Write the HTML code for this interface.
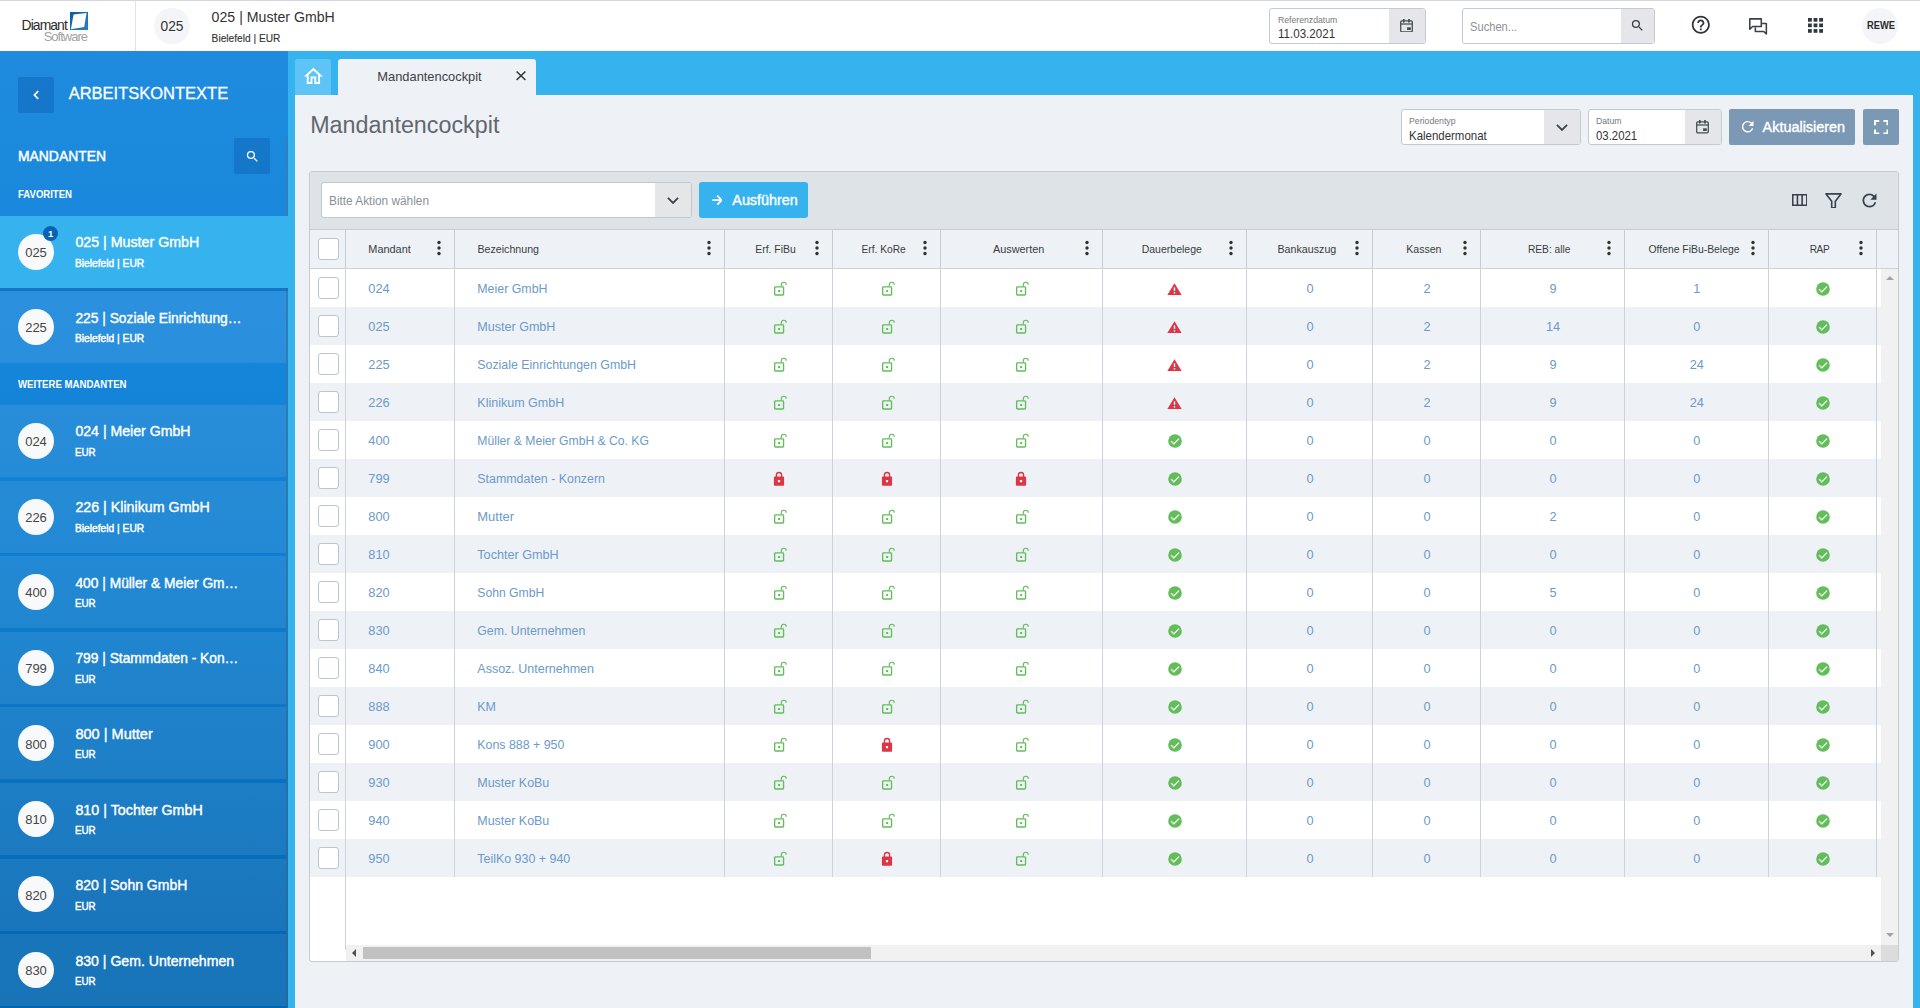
<!DOCTYPE html>
<html lang="de"><head><meta charset="utf-8"><title>Mandantencockpit</title><style>
html,body{margin:0;padding:0}
body{width:1920px;height:1008px;overflow:hidden;position:relative;background:#35b3ef;font-family:"Liberation Sans",sans-serif;}
div,span,svg,header,aside,main{position:absolute;}
.t{white-space:nowrap;}
#top{left:0;top:0;width:1920px;height:51px;background:#fff;box-sizing:border-box;border-top:1px solid #d3d6da;}
#top>*{margin-top:-1px}
#side{left:0;top:51px;width:288px;height:957px;overflow:hidden;background:linear-gradient(180deg,#1e8bde 0px,#1585d9 319px,#0c7bcc 579px,#0469b5 881px,#0366b1 957px);}
#main{left:0;top:0;width:1920px;height:1008px;}
#top,#side,#main{opacity:.999}
</style></head><body><header id="top"><span class="t" style="top: 19.01px; font-size: 13.9px; color: rgb(43, 43, 43); line-height: 13.9px; left: 21.6px; letter-spacing: -0.922px;">Diamant</span><span class="t" style="top: 30px; font-size: 13px; color: rgb(162, 162, 162); line-height: 13px; left: 43.7px; letter-spacing: -0.988px;">Software</span><svg class="i" style="left:70px;top:12px" width="18" height="18" viewBox="0 0 18 18"><defs><linearGradient id="lg" x1="0" y1="0" x2="1" y2="1"><stop offset="0" stop-color="#0f5c9e"></stop><stop offset="1" stop-color="#2a80c4"></stop></linearGradient></defs><rect width="18" height="18" fill="url(#lg)"></rect><path fill="#fff" d="M3.6 2.6L16.6 0.9 14.2 14.9 0.9 17.2z"></path></svg><div style="left:135px;top:0px;width:1px;height:51px;background:#dfe2e6;"></div><div style="left:154px;top:8px;width:36px;height:36px;background:#f4f5f8;border-radius:50%;"></div><span class="t" style="top: 20.02px; font-size: 13.72px; color: rgb(51, 51, 51); line-height: 13.72px; left: 22px; width: 300px; text-align: center; letter-spacing: 0.005px;">025</span><span class="t" style="top: 10px; font-size: 14.15px; color: rgb(51, 51, 51); line-height: 14.15px; left: 211.6px; letter-spacing: 0.005px;">025 | Muster GmbH</span><span class="t" style="top: 34.02px; font-size: 10.17px; color: rgb(51, 51, 51); line-height: 10.17px; -webkit-text-stroke: 0.12px rgb(51, 51, 51); left: 211.6px; letter-spacing: 0.008px;">Bielefeld | EUR</span><div style="left:1269px;top:8px;width:157px;height:36px;background:#fff;border:1px solid #c4cad1;border-radius:3px;box-sizing:border-box;overflow:hidden;"><div style="left:119px;top:0px;width:37px;height:34px;background:#e4e6e9;"></div></div><span class="t" style="top: 16.01px; font-size: 9.2px; color: rgb(116, 121, 127); line-height: 9.2px; left: 1278.3px; transform-origin: 0px 50%; transform: scaleX(0.9423);">Referenzdatum</span><span class="t" style="top: 28.01px; font-size: 12.5px; color: rgb(51, 51, 51); line-height: 12.5px; left: 1278.3px; transform-origin: 0px 50%; transform: scaleX(0.9263);">11.03.2021</span><svg class="i" style="left:1400.1px;top:18.5px" width="13" height="13.5" viewBox="0 0 13 13.5"><g fill="none" stroke="#454c53"><rect x="0.7" y="1.9" width="11.6" height="10.9" rx="1.1" stroke-width="1.25"></rect><path d="M0.7 5h11.6" stroke-width="1.25"></path><path d="M3.8 0.4v2.4M9 0.4v2.4" stroke-width="1.7" stroke-linecap="round"></path></g><rect x="7.1" y="8.3" width="3.7" height="2.7" fill="#454c53"></rect></svg><div style="left:1462px;top:8px;width:193px;height:36px;background:#fff;border:1px solid #c4cad1;border-radius:3px;box-sizing:border-box;overflow:hidden;"><div style="left:158px;top:0px;width:34px;height:34px;background:#e4e6e9;"></div></div><span class="t" style="top: 20px; font-size: 13px; color: rgb(141, 146, 152); line-height: 13px; left: 1470.2px; transform-origin: 0px 50%; transform: scaleX(0.8573);">Suchen...</span><svg class="i" style="left:1629.5px;top:18.0px" width="15" height="15" viewBox="0 0 24 24"><path fill="#3a3f45" d="M15.5 14h-.79l-.28-.27A6.471 6.471 0 0 0 16 9.5 6.5 6.5 0 1 0 9.5 16c1.61 0 3.09-.59 4.23-1.57l.27.28v.79l5 4.99L20.49 19l-4.99-5zm-6 0C7.01 14 5 11.99 5 9.5S7.01 5 9.5 5 14 7.01 14 9.5 11.99 14 9.5 14z"></path></svg><svg class="i" style="left:1690.2px;top:14.4px" width="21.6" height="21.6" viewBox="0 0 24 24"><path fill="#2f3439" d="M11 18h2v-2h-2v2zm1-16C6.48 2 2 6.48 2 12s4.48 10 10 10 10-4.48 10-10S17.52 2 12 2zm0 18c-4.41 0-8-3.59-8-8s3.59-8 8-8 8 3.59 8 8-3.59 8-8 8zm0-14c-2.21 0-4 1.79-4 4h2c0-1.1.9-2 2-2s2 .9 2 2c0 2-3 1.75-3 5h2c0-2.25 3-2.500 3-5 0-2.210-1.790-4-4-4z"></path></svg><svg class="i" style="left:1748px;top:17px" width="21" height="19" viewBox="0 0 21 19"><g fill="none" stroke="#3a4149" stroke-width="1.55" stroke-linejoin="round"><path d="M1.8 1.85h11.5v7.6H4.6L1.8 12.3z"></path><path d="M14.1 6.45h4.25V17l-2.6-2.5H7.35v-4.3"></path></g></svg><svg class="i" style="left:1808.3px;top:18.1px" width="15.2" height="15.2" viewBox="0 0 15.2 15.2"><rect x="0.0" y="0.0" width="3.8" height="3.7" fill="#30373e"></rect><rect x="5.6" y="0.0" width="3.8" height="3.7" fill="#30373e"></rect><rect x="11.2" y="0.0" width="3.8" height="3.7" fill="#30373e"></rect><rect x="0.0" y="5.5" width="3.8" height="3.7" fill="#30373e"></rect><rect x="5.6" y="5.5" width="3.8" height="3.7" fill="#30373e"></rect><rect x="11.2" y="5.5" width="3.8" height="3.7" fill="#30373e"></rect><rect x="0.0" y="11.1" width="3.8" height="3.7" fill="#30373e"></rect><rect x="5.6" y="11.1" width="3.8" height="3.7" fill="#30373e"></rect><rect x="11.2" y="11.1" width="3.8" height="3.7" fill="#30373e"></rect></svg><div style="left:1862px;top:7.5px;width:36px;height:36px;background:#f4f5f8;border-radius:50%;"></div><span class="t" style="top: 20.01px; font-size: 11.4px; color: rgb(43, 43, 43); line-height: 11.4px; font-weight: 700; left: 1730.6px; width: 300px; text-align: center; transform-origin: 50% 50%; transform: scaleX(0.819);">REWE</span></header>
<aside id="side"><div style="left:18px;top:26px;width:36px;height:36px;background:rgba(10,90,170,0.38);border-radius:2px;"></div><svg class="i" style="left:30.5px;top:37.5px" width="10" height="12" viewBox="0 0 10 12"><path fill="none" stroke="#fff" stroke-width="1.7" d="M7.2 2.2L3.4 6l3.8 3.8"></path></svg><span class="t" style="top: 34.01px; font-size: 16.5px; color: rgb(255, 255, 255); line-height: 16.5px; -webkit-text-stroke: 0.3px rgb(255, 255, 255); left: 68.7px; letter-spacing: -0.002px;">ARBEITSKONTEXTE</span><span class="t" style="top: 99.01px; font-size: 13.89px; color: rgb(255, 255, 255); line-height: 13.89px; -webkit-text-stroke: 0.45px rgb(255, 255, 255); left: 18px; letter-spacing: 0.014px;">MANDANTEN</span><div style="left:234px;top:87px;width:36px;height:36px;background:rgba(10,90,170,0.38);border-radius:2px;"></div><svg class="i" style="left:244.5px;top:97.5px" width="15" height="15" viewBox="0 0 24 24"><path fill="#fff" d="M15.5 14h-.79l-.28-.27A6.471 6.471 0 0 0 16 9.5 6.5 6.5 0 1 0 9.5 16c1.61 0 3.09-.59 4.23-1.57l.27.28v.79l5 4.99L20.49 19l-4.99-5zm-6 0C7.01 14 5 11.99 5 9.5S7.01 5 9.5 5 14 7.01 14 9.5 11.99 14 9.5 14z"></path></svg><span class="t" style="top: 139.01px; font-size: 10.3px; color: rgb(255, 255, 255); line-height: 10.3px; font-weight: 700; left: 18px; transform-origin: 0px 50%; transform: scaleX(0.9283);">FAVORITEN</span><span class="t" style="top: 329.01px; font-size: 10.3px; color: rgb(255, 255, 255); line-height: 10.3px; font-weight: 700; left: 18px; transform-origin: 0px 50%; transform: scaleX(0.9343);">WEITERE MANDANTEN</span><div style="left:285.6px;top:86px;width:2.4px;height:871px;background:rgba(90,110,130,0.38);"></div><div class="it" style="left:0px;top:165px;width:288px;height:72px;background:#36b3ef;"><div style="left:18px;top:18px;width:36px;height:36px;background:#f8f9fb;border-radius:50%;"></div><span class="t" style="top: 30.01px; font-size: 13.01px; color: rgb(69, 69, 69); line-height: 13.01px; left: -114px; width: 300px; text-align: center; letter-spacing: -0.002px;">025</span><span class="t" style="top: 19.01px; font-size: 14.23px; color: rgb(255, 255, 255); line-height: 14.23px; -webkit-text-stroke: 0.4px rgb(255, 255, 255); left: 75.4px; letter-spacing: 0.005px;">025 | Muster GmbH</span><span class="t" style="top: 42px; font-size: 10.7px; color: rgb(255, 255, 255); line-height: 10.7px; -webkit-text-stroke: 0.45px rgb(255, 255, 255); left: 75.4px; transform-origin: 0px 50%; transform: scaleX(0.9574);">Bielefeld | EUR</span><div style="left:43px;top:10px;width:15px;height:15px;background:#0a62b3;border-radius:50%;"></div><span class="t" style="top: 13.01px; font-size: 9.5px; color: rgb(255, 255, 255); line-height: 9.5px; font-weight: 700; left: -99.4px; width: 300px; text-align: center;">1</span></div><div style="left:0px;top:237px;width:288px;height:3.2px;background:rgba(0,50,110,0.18);"></div><div class="it" style="left:0px;top:240.2px;width:286px;height:72px;background:rgba(255,255,255,0.085);"><div style="left:18px;top:17.80000000000001px;width:36px;height:36px;background:#f8f9fb;border-radius:50%;"></div><span class="t" style="top: 29.82px; font-size: 13.01px; color: rgb(69, 69, 69); line-height: 13.01px; left: -114px; width: 300px; text-align: center; letter-spacing: -0.002px;">225</span><span class="t" style="top: 20.82px; font-size: 13.8px; color: rgb(255, 255, 255); line-height: 13.8px; -webkit-text-stroke: 0.4px rgb(255, 255, 255); left: 75.4px; letter-spacing: 0px;">225 | Soziale Einrichtung…</span><span class="t" style="top: 41.82px; font-size: 10.7px; color: rgb(255, 255, 255); line-height: 10.7px; -webkit-text-stroke: 0.45px rgb(255, 255, 255); left: 75.4px; transform-origin: 0px 50%; transform: scaleX(0.9574);">Bielefeld | EUR</span></div><div class="it" style="left:0px;top:354px;width:286px;height:72px;background:rgba(255,255,255,0.085);"><div style="left:18px;top:18px;width:36px;height:36px;background:#f8f9fb;border-radius:50%;"></div><span class="t" style="top: 30.01px; font-size: 13.01px; color: rgb(69, 69, 69); line-height: 13.01px; left: -114px; width: 300px; text-align: center; letter-spacing: -0.002px;">024</span><span class="t" style="top: 19px; font-size: 14.12px; color: rgb(255, 255, 255); line-height: 14.12px; -webkit-text-stroke: 0.4px rgb(255, 255, 255); left: 75.4px; letter-spacing: 0.006px;">024 | Meier GmbH</span><span class="t" style="top: 42px; font-size: 10.7px; color: rgb(255, 255, 255); line-height: 10.7px; -webkit-text-stroke: 0.45px rgb(255, 255, 255); left: 75.4px; transform-origin: 0px 50%; transform: scaleX(0.9168);">EUR</span></div><div class="it" style="left:0px;top:429.6px;width:286px;height:72px;background:rgba(255,255,255,0.085);"><div style="left:18px;top:18.399999999999977px;width:36px;height:36px;background:#f8f9fb;border-radius:50%;"></div><span class="t" style="top: 30.42px; font-size: 13.01px; color: rgb(69, 69, 69); line-height: 13.01px; left: -114px; width: 300px; text-align: center; letter-spacing: -0.002px;">226</span><span class="t" style="top: 19.41px; font-size: 14.24px; color: rgb(255, 255, 255); line-height: 14.24px; -webkit-text-stroke: 0.4px rgb(255, 255, 255); left: 75.4px; letter-spacing: 0.004px;">226 | Klinikum GmbH</span><span class="t" style="top: 42.42px; font-size: 10.7px; color: rgb(255, 255, 255); line-height: 10.7px; -webkit-text-stroke: 0.45px rgb(255, 255, 255); left: 75.4px; transform-origin: 0px 50%; transform: scaleX(0.9574);">Bielefeld | EUR</span></div><div class="it" style="left:0px;top:505.20000000000005px;width:286px;height:72px;background:rgba(255,255,255,0.085);"><div style="left:18px;top:17.799999999999955px;width:36px;height:36px;background:#f8f9fb;border-radius:50%;"></div><span class="t" style="top: 29.82px; font-size: 13.01px; color: rgb(69, 69, 69); line-height: 13.01px; left: -114px; width: 300px; text-align: center; letter-spacing: -0.002px;">400</span><span class="t" style="top: 20.82px; font-size: 13.79px; color: rgb(255, 255, 255); line-height: 13.79px; -webkit-text-stroke: 0.4px rgb(255, 255, 255); left: 75.4px; letter-spacing: 0.005px;">400 | Müller &amp; Meier Gm…</span><span class="t" style="top: 41.82px; font-size: 10.7px; color: rgb(255, 255, 255); line-height: 10.7px; -webkit-text-stroke: 0.45px rgb(255, 255, 255); left: 75.4px; transform-origin: 0px 50%; transform: scaleX(0.9168);">EUR</span></div><div class="it" style="left:0px;top:580.8px;width:286px;height:72px;background:rgba(255,255,255,0.085);"><div style="left:18px;top:18.200000000000045px;width:36px;height:36px;background:#f8f9fb;border-radius:50%;"></div><span class="t" style="top: 30.21px; font-size: 13.01px; color: rgb(69, 69, 69); line-height: 13.01px; left: -114px; width: 300px; text-align: center; letter-spacing: -0.002px;">799</span><span class="t" style="top: 20.22px; font-size: 13.79px; color: rgb(255, 255, 255); line-height: 13.79px; -webkit-text-stroke: 0.4px rgb(255, 255, 255); left: 75.4px; letter-spacing: 0.004px;">799 | Stammdaten - Kon…</span><span class="t" style="top: 42.22px; font-size: 10.7px; color: rgb(255, 255, 255); line-height: 10.7px; -webkit-text-stroke: 0.45px rgb(255, 255, 255); left: 75.4px; transform-origin: 0px 50%; transform: scaleX(0.9168);">EUR</span></div><div class="it" style="left:0px;top:656.4px;width:286px;height:72px;background:rgba(255,255,255,0.085);"><div style="left:18px;top:17.600000000000023px;width:36px;height:36px;background:#f8f9fb;border-radius:50%;"></div><span class="t" style="top: 30.62px; font-size: 13.01px; color: rgb(69, 69, 69); line-height: 13.01px; left: -114px; width: 300px; text-align: center; letter-spacing: -0.002px;">800</span><span class="t" style="top: 19.62px; font-size: 14.55px; color: rgb(255, 255, 255); line-height: 14.55px; -webkit-text-stroke: 0.4px rgb(255, 255, 255); left: 75.4px; letter-spacing: 0.004px;">800 | Mutter</span><span class="t" style="top: 41.62px; font-size: 10.7px; color: rgb(255, 255, 255); line-height: 10.7px; -webkit-text-stroke: 0.45px rgb(255, 255, 255); left: 75.4px; transform-origin: 0px 50%; transform: scaleX(0.9168);">EUR</span></div><div class="it" style="left:0px;top:732px;width:286px;height:72px;background:rgba(255,255,255,0.085);"><div style="left:18px;top:18px;width:36px;height:36px;background:#f8f9fb;border-radius:50%;"></div><span class="t" style="top: 30.01px; font-size: 13.01px; color: rgb(69, 69, 69); line-height: 13.01px; left: -114px; width: 300px; text-align: center; letter-spacing: -0.002px;">810</span><span class="t" style="top: 20.01px; font-size: 14.29px; color: rgb(255, 255, 255); line-height: 14.29px; -webkit-text-stroke: 0.4px rgb(255, 255, 255); left: 75.4px; letter-spacing: 0.007px;">810 | Tochter GmbH</span><span class="t" style="top: 42px; font-size: 10.7px; color: rgb(255, 255, 255); line-height: 10.7px; -webkit-text-stroke: 0.45px rgb(255, 255, 255); left: 75.4px; transform-origin: 0px 50%; transform: scaleX(0.9168);">EUR</span></div><div class="it" style="left:0px;top:807.6px;width:286px;height:72px;background:rgba(255,255,255,0.085);"><div style="left:18px;top:17.399999999999977px;width:36px;height:36px;background:#f8f9fb;border-radius:50%;"></div><span class="t" style="top: 30.42px; font-size: 13.01px; color: rgb(69, 69, 69); line-height: 13.01px; left: -114px; width: 300px; text-align: center; letter-spacing: -0.002px;">820</span><span class="t" style="top: 19.42px; font-size: 14.02px; color: rgb(255, 255, 255); line-height: 14.02px; -webkit-text-stroke: 0.4px rgb(255, 255, 255); left: 75.4px; letter-spacing: 0.004px;">820 | Sohn GmbH</span><span class="t" style="top: 42.42px; font-size: 10.7px; color: rgb(255, 255, 255); line-height: 10.7px; -webkit-text-stroke: 0.45px rgb(255, 255, 255); left: 75.4px; transform-origin: 0px 50%; transform: scaleX(0.9168);">EUR</span></div><div class="it" style="left:0px;top:883.2px;width:286px;height:72px;background:rgba(255,255,255,0.085);"><div style="left:18px;top:17.799999999999955px;width:36px;height:36px;background:#f8f9fb;border-radius:50%;"></div><span class="t" style="top: 29.82px; font-size: 13.01px; color: rgb(69, 69, 69); line-height: 13.01px; left: -114px; width: 300px; text-align: center; letter-spacing: -0.002px;">830</span><span class="t" style="top: 19.82px; font-size: 14.09px; color: rgb(255, 255, 255); line-height: 14.09px; -webkit-text-stroke: 0.4px rgb(255, 255, 255); left: 75.4px; letter-spacing: 0.004px;">830 | Gem. Unternehmen</span><span class="t" style="top: 41.82px; font-size: 10.7px; color: rgb(255, 255, 255); line-height: 10.7px; -webkit-text-stroke: 0.45px rgb(255, 255, 255); left: 75.4px; transform-origin: 0px 50%; transform: scaleX(0.9168);">EUR</span></div></aside>
<main id="main"><div style="left:295px;top:59px;width:36px;height:36px;background:#5ec4f6;border-radius:2px 2px 0 0;"></div><svg class="i" style="left:302.1px;top:65.05px" width="22.8" height="22.8" viewBox="0 0 24 24"><path fill="#fff" d="M12 5.69l5 4.5V18h-2v-6H9v6H7v-7.81l5-4.500M12 3L2 12h3v8h6v-6h2v6h6v-8h3L12 3z"></path></svg><div style="left:338px;top:59px;width:198px;height:36px;background:#eef2f6;border-radius:3px 3px 0 0;"></div><span class="t" style="top: 71px; font-size: 12.86px; color: rgb(60, 64, 70); line-height: 12.86px; left: 377.3px; letter-spacing: 0.002px;">Mandantencockpit</span><svg class="i" style="left:516.1px;top:71.2px" width="10" height="9.6" viewBox="0 0 10 10" preserveAspectRatio="none"><path stroke="#333" stroke-width="1.5" fill="none" d="M0.6 0.6l8.8 8.8M9.4 0.6L0.6 9.4"></path></svg><div style="left:295px;top:95px;width:1618px;height:913px;background:#eef2f6;"></div><span class="t h1" style="top: 114px; font-size: 23.31px; color: rgb(98, 103, 109); line-height: 23.31px; left: 310.2px; letter-spacing: 0.007px;">Mandantencockpit</span><div style="left:1401px;top:109px;width:180px;height:36px;background:#fff;border:1px solid #c4cad1;border-radius:3px;box-sizing:border-box;overflow:hidden;"><div style="left:142px;top:0px;width:37px;height:34px;background:#e4e6e9;"></div></div><span class="t" style="top: 117.01px; font-size: 9.2px; color: rgb(116, 121, 127); line-height: 9.2px; left: 1409.4px; transform-origin: 0px 50%; transform: scaleX(0.9501);">Periodentyp</span><span class="t" style="top: 129px; font-size: 13px; color: rgb(51, 51, 51); line-height: 13px; left: 1409.4px; transform-origin: 0px 50%; transform: scaleX(0.8812);">Kalendermonat</span><svg class="i" style="left:1556.2px;top:123.7px" width="12" height="7.4" viewBox="0 0 12 7.4"><path fill="none" stroke="#3a424a" stroke-width="1.75" d="M0.9 0.9L6 6 11.1 0.9"></path></svg><div style="left:1588px;top:109px;width:134px;height:36px;background:#fff;border:1px solid #c4cad1;border-radius:3px;box-sizing:border-box;overflow:hidden;"><div style="left:96px;top:0px;width:37px;height:34px;background:#e4e6e9;"></div></div><span class="t" style="top: 117.01px; font-size: 9.2px; color: rgb(116, 121, 127); line-height: 9.2px; left: 1596.4px; transform-origin: 0px 50%; transform: scaleX(0.946);">Datum</span><span class="t" style="top: 130.01px; font-size: 12.5px; color: rgb(51, 51, 51); line-height: 12.5px; left: 1596.4px; transform-origin: 0px 50%; transform: scaleX(0.9118);">03.2021</span><svg class="i" style="left:1696.4px;top:120px" width="13" height="13.5" viewBox="0 0 13 13.5"><g fill="none" stroke="#454c53"><rect x="0.7" y="1.9" width="11.6" height="10.9" rx="1.1" stroke-width="1.25"></rect><path d="M0.7 5h11.6" stroke-width="1.25"></path><path d="M3.8 0.4v2.4M9 0.4v2.4" stroke-width="1.7" stroke-linecap="round"></path></g><rect x="7.1" y="8.3" width="3.7" height="2.7" fill="#454c53"></rect></svg><div style="left:1729px;top:109px;width:126px;height:36px;background:#7b98b5;border-radius:2px;"></div><svg class="i" style="left:1738.6px;top:118.2px" width="17.4" height="17.4" viewBox="0 0 24 24"><path fill="#fff" d="M17.65 6.35A7.958 7.958 0 0 0 12 4c-4.42 0-7.99 3.58-7.99 8s3.57 8 7.99 8c3.73 0 6.84-2.55 7.73-6h-2.08A5.99 5.99 0 0 1 12 18c-3.31 0-6-2.69-6-6s2.69-6 6-6c1.66 0 3.14.69 4.22 1.78L13 11h7V4l-2.35 2.35z"></path></svg><span class="t" style="top: 120px; font-size: 14.41px; color: rgb(255, 255, 255); line-height: 14.41px; -webkit-text-stroke: 0.4px rgb(255, 255, 255); left: 1762.6px; letter-spacing: 0.001px;">Aktualisieren</span><div style="left:1863px;top:109px;width:36px;height:36px;background:#7b98b5;border-radius:2px;"></div><svg class="i" style="left:1873.7px;top:119.7px" width="14.6" height="14.6" viewBox="0 0 14 14"><path fill="#fff" d="M0 0h5v2H2v3H0zM9 0h5v5h-2V2H9zM0 9h2v3h3v2H0zM12 9h2v5H9v-2h3z"></path></svg><div class="panel" style="left:309px;top:171px;width:1590px;height:791px;border:1px solid #c4cbd3;border-radius:3px;box-sizing:border-box;background:#fff;overflow:hidden;"><div style="left:0px;top:0px;width:1588px;height:57px;background:#dee3e8;"></div><div style="left:11px;top:10px;width:371px;height:36px;background:#fff;border:1px solid #c0c7cf;border-radius:3px;box-sizing:border-box;overflow:hidden;"><div style="left:333px;top:0px;width:37px;height:34px;background:#e5e6e8;"></div></div><span class="t" style="top: 23.01px; font-size: 12.5px; color: rgb(138, 144, 151); line-height: 12.5px; left: 19.4px; transform-origin: 0px 50%; transform: scaleX(0.9467);">Bitte Aktion wählen</span><svg class="i" style="left:357.4px;top:24.999999999999993px" width="12" height="7.4" viewBox="0 0 12 7.4"><path fill="none" stroke="#3a424a" stroke-width="1.75" d="M0.9 0.9L6 6 11.1 0.9"></path></svg><div style="left:389px;top:10px;width:109px;height:36px;background:#36b3ef;border-radius:3px;"></div><svg class="i" style="left:401.6px;top:22.80000000000001px" width="10.8" height="10.4" viewBox="0 0 10.8 10.4"><path fill="none" stroke="#fff" stroke-width="1.65" d="M0.3 5.2h9.3M5.2 0.7L9.8 5.2 5.2 9.7"></path></svg><span class="t" style="top: 21.01px; font-size: 14.37px; color: rgb(255, 255, 255); line-height: 14.37px; -webkit-text-stroke: 0.4px rgb(255, 255, 255); left: 422.3px; letter-spacing: 0.004px;">Ausführen</span><svg class="i" style="left:1481.8px;top:21.80000000000001px" width="15.6" height="12" viewBox="0 0 15.6 12"><path fill="none" stroke="#38424b" stroke-width="1.6" d="M0.75 0.75h14.1v10.5H0.75zM5.45 0.75v10.5M10.15 0.75v10.5"></path></svg><svg class="i" style="left:1515.1px;top:20.5px" width="17" height="15.6" viewBox="0 0 17 15.6"><path fill="none" stroke="#38424b" stroke-width="1.6" stroke-linejoin="round" d="M1 0.9h15L10.3 8.2v6.5H6.7V8.2z"></path></svg><svg class="i" style="left:1548.7px;top:17.69999999999999px" width="21" height="21" viewBox="0 0 24 24"><path fill="#38424b" d="M17.65 6.35A7.958 7.958 0 0 0 12 4c-4.42 0-7.99 3.58-7.99 8s3.57 8 7.99 8c3.73 0 6.84-2.55 7.73-6h-2.08A5.99 5.99 0 0 1 12 18c-3.31 0-6-2.69-6-6s2.69-6 6-6c1.66 0 3.14.69 4.22 1.78L13 11h7V4l-2.35 2.35z"></path></svg><div style="left:0px;top:57px;width:1588px;height:1px;background:#c6cdd4;"></div><div style="left:0px;top:58px;width:1588px;height:38px;background:#eef2f6;"></div><div style="left:0px;top:96px;width:1588px;height:1px;background:#cbd2d9;"></div><span class="t" style="top: 72.01px; font-size: 10.92px; color: rgb(56, 61, 67); line-height: 10.92px; left: 58.3px; letter-spacing: 0.008px;">Mandant</span><svg class="i" style="left:126.80000000000001px;top:68.25px" width="4" height="16" viewBox="0 0 4 16"><circle cx="2" cy="2.45" r="1.7" fill="#333"></circle><circle cx="2" cy="8" r="1.7" fill="#333"></circle><circle cx="2" cy="13.55" r="1.7" fill="#333"></circle></svg><span class="t" style="top: 72.01px; font-size: 10.64px; color: rgb(56, 61, 67); line-height: 10.64px; left: 167.5px; letter-spacing: 0.006px;">Bezeichnung</span><svg class="i" style="left:396.79999999999995px;top:68.25px" width="4" height="16" viewBox="0 0 4 16"><circle cx="2" cy="2.45" r="1.7" fill="#333"></circle><circle cx="2" cy="8" r="1.7" fill="#333"></circle><circle cx="2" cy="13.55" r="1.7" fill="#333"></circle></svg><span class="t" style="top: 73px; font-size: 10.44px; color: rgb(56, 61, 67); line-height: 10.44px; left: 315.5px; width: 300px; text-align: center; letter-spacing: -0.001px;">Erf. FiBu</span><svg class="i" style="left:504.70000000000005px;top:68.25px" width="4" height="16" viewBox="0 0 4 16"><circle cx="2" cy="2.45" r="1.7" fill="#333"></circle><circle cx="2" cy="8" r="1.7" fill="#333"></circle><circle cx="2" cy="13.55" r="1.7" fill="#333"></circle></svg><span class="t" style="top: 73.01px; font-size: 10.22px; color: rgb(56, 61, 67); line-height: 10.22px; left: 423.6px; width: 300px; text-align: center; letter-spacing: -0.002px;">Erf. KoRe</span><svg class="i" style="left:612.6px;top:68.25px" width="4" height="16" viewBox="0 0 4 16"><circle cx="2" cy="2.45" r="1.7" fill="#333"></circle><circle cx="2" cy="8" r="1.7" fill="#333"></circle><circle cx="2" cy="13.55" r="1.7" fill="#333"></circle></svg><span class="t" style="top: 72.01px; font-size: 10.86px; color: rgb(56, 61, 67); line-height: 10.86px; left: 558.7px; width: 300px; text-align: center; letter-spacing: -0.002px;">Auswerten</span><svg class="i" style="left:774.9000000000001px;top:68.25px" width="4" height="16" viewBox="0 0 4 16"><circle cx="2" cy="2.45" r="1.7" fill="#333"></circle><circle cx="2" cy="8" r="1.7" fill="#333"></circle><circle cx="2" cy="13.55" r="1.7" fill="#333"></circle></svg><span class="t" style="top: 72.01px; font-size: 10.51px; color: rgb(56, 61, 67); line-height: 10.51px; left: 711.8px; width: 300px; text-align: center; letter-spacing: 0.006px;">Dauerbelege</span><svg class="i" style="left:918.8px;top:68.25px" width="4" height="16" viewBox="0 0 4 16"><circle cx="2" cy="2.45" r="1.7" fill="#333"></circle><circle cx="2" cy="8" r="1.7" fill="#333"></circle><circle cx="2" cy="13.55" r="1.7" fill="#333"></circle></svg><span class="t" style="top: 72.01px; font-size: 10.68px; color: rgb(56, 61, 67); line-height: 10.68px; left: 846.9px; width: 300px; text-align: center; letter-spacing: 0.006px;">Bankauszug</span><svg class="i" style="left:1044.7px;top:68.25px" width="4" height="16" viewBox="0 0 4 16"><circle cx="2" cy="2.45" r="1.7" fill="#333"></circle><circle cx="2" cy="8" r="1.7" fill="#333"></circle><circle cx="2" cy="13.55" r="1.7" fill="#333"></circle></svg><span class="t" style="top: 72.01px; font-size: 10.55px; color: rgb(56, 61, 67); line-height: 10.55px; left: 963.9px; width: 300px; text-align: center; letter-spacing: 0.003px;">Kassen</span><svg class="i" style="left:1152.6px;top:68.25px" width="4" height="16" viewBox="0 0 4 16"><circle cx="2" cy="2.45" r="1.7" fill="#333"></circle><circle cx="2" cy="8" r="1.7" fill="#333"></circle><circle cx="2" cy="13.55" r="1.7" fill="#333"></circle></svg><span class="t" style="top: 73.01px; font-size: 10.2px; color: rgb(56, 61, 67); line-height: 10.2px; left: 1089.2px; width: 300px; text-align: center; letter-spacing: 0.004px;">REB: alle</span><svg class="i" style="left:1296.6px;top:68.25px" width="4" height="16" viewBox="0 0 4 16"><circle cx="2" cy="2.45" r="1.7" fill="#333"></circle><circle cx="2" cy="8" r="1.7" fill="#333"></circle><circle cx="2" cy="13.55" r="1.7" fill="#333"></circle></svg><span class="t" style="top: 73.01px; font-size: 10.38px; color: rgb(56, 61, 67); line-height: 10.38px; left: 1234px; width: 300px; text-align: center; letter-spacing: 0.004px;">Offene FiBu-Belege</span><svg class="i" style="left:1440.7px;top:68.25px" width="4" height="16" viewBox="0 0 4 16"><circle cx="2" cy="2.45" r="1.7" fill="#333"></circle><circle cx="2" cy="8" r="1.7" fill="#333"></circle><circle cx="2" cy="13.55" r="1.7" fill="#333"></circle></svg><span class="t" style="top: 73.01px; font-size: 10.12px; color: rgb(56, 61, 67); line-height: 10.12px; left: 1359.5px; width: 300px; text-align: center; letter-spacing: -0.348px;">RAP</span><svg class="i" style="left:1548.8px;top:68.25px" width="4" height="16" viewBox="0 0 4 16"><circle cx="2" cy="2.45" r="1.7" fill="#333"></circle><circle cx="2" cy="8" r="1.7" fill="#333"></circle><circle cx="2" cy="13.55" r="1.7" fill="#333"></circle></svg><div style="left:8px;top:66px;width:21px;height:22px;background:#fff;border:1px solid #bcc4cd;border-radius:3px;box-sizing:border-box;"></div><div style="left:0px;top:97px;width:1571px;height:676px;background:#fff;"></div><div style="left:8px;top:105px;width:21px;height:22px;background:#fff;border:1px solid #bcc4cd;border-radius:3px;box-sizing:border-box;"></div><span class="t" style="top: 111px; font-size: 12.77px; color: rgb(107, 154, 203); line-height: 12.77px; left: 58.3px; letter-spacing: -0.006px;">024</span><span class="t" style="top: 111.01px; font-size: 12.39px; color: rgb(107, 154, 203); line-height: 12.39px; left: 167.3px; letter-spacing: 0.007px;">Meier GmbH</span><svg class="i" style="left:463.4px;top:108.80000000000001px" width="15" height="15" viewBox="0 0 15 15"><g fill="none" stroke="#62bd5a"><rect x="1.65" y="5.9" width="8.9" height="8.1" rx="0.8" stroke-width="1.35"></rect><path d="M8.3 5.6V3.7a2.5 2.5 0 0 1 5 0" stroke-width="1.15"></path></g><rect x="5.05" y="8.9" width="2.1" height="2.1" rx="0.6" fill="#62bd5a"></rect></svg><svg class="i" style="left:571.0px;top:108.80000000000001px" width="15" height="15" viewBox="0 0 15 15"><g fill="none" stroke="#62bd5a"><rect x="1.65" y="5.9" width="8.9" height="8.1" rx="0.8" stroke-width="1.35"></rect><path d="M8.3 5.6V3.7a2.5 2.5 0 0 1 5 0" stroke-width="1.15"></path></g><rect x="5.05" y="8.9" width="2.1" height="2.1" rx="0.6" fill="#62bd5a"></rect></svg><svg class="i" style="left:705.2px;top:108.80000000000001px" width="15" height="15" viewBox="0 0 15 15"><g fill="none" stroke="#62bd5a"><rect x="1.65" y="5.9" width="8.9" height="8.1" rx="0.8" stroke-width="1.35"></rect><path d="M8.3 5.6V3.7a2.5 2.5 0 0 1 5 0" stroke-width="1.15"></path></g><rect x="5.05" y="8.9" width="2.1" height="2.1" rx="0.6" fill="#62bd5a"></rect></svg><svg class="i" style="left:857px;top:110.69999999999997px" width="15" height="12.4" viewBox="0 0 15 12.4"><path fill="#dc3545" d="M7.5 0.3L14.7 12.1H0.3z"></path><rect x="6.8" y="4.4" width="1.4" height="3.6" fill="#fff"></rect><rect x="6.8" y="9.1" width="1.4" height="1.5" fill="#fff"></rect></svg><span class="t" style="top: 111px; font-size: 12.7px; color: rgb(107, 154, 203); line-height: 12.7px; left: 850px; width: 300px; text-align: center; letter-spacing: 0px;">0</span><span class="t" style="top: 111px; font-size: 12.7px; color: rgb(107, 154, 203); line-height: 12.7px; left: 967px; width: 300px; text-align: center; letter-spacing: 0px;">2</span><span class="t" style="top: 111px; font-size: 12.7px; color: rgb(107, 154, 203); line-height: 12.7px; left: 1093px; width: 300px; text-align: center; letter-spacing: 0px;">9</span><span class="t" style="top: 111px; font-size: 12.7px; color: rgb(107, 154, 203); line-height: 12.7px; left: 1236.8px; width: 300px; text-align: center; letter-spacing: 0px;">1</span><svg class="i" style="left:1505.8px;top:109.89999999999998px" width="14" height="14" viewBox="0 0 14 14"><circle cx="7" cy="7" r="6.8" fill="#62bd5a"></circle><path fill="none" stroke="#fff" stroke-width="1.3" d="M3.1 7.1l2.7 2.8 5.2-5.3"></path></svg><div style="left:0px;top:135px;width:1571px;height:38px;background:#eef2f6;"></div><div style="left:8px;top:143px;width:21px;height:22px;background:#fff;border:1px solid #bcc4cd;border-radius:3px;box-sizing:border-box;"></div><span class="t" style="top: 149px; font-size: 12.77px; color: rgb(107, 154, 203); line-height: 12.77px; left: 58.3px; letter-spacing: -0.006px;">025</span><span class="t" style="top: 149px; font-size: 12.55px; color: rgb(107, 154, 203); line-height: 12.55px; left: 167.3px; letter-spacing: 0.001px;">Muster GmbH</span><svg class="i" style="left:463.4px;top:146.8px" width="15" height="15" viewBox="0 0 15 15"><g fill="none" stroke="#62bd5a"><rect x="1.65" y="5.9" width="8.9" height="8.1" rx="0.8" stroke-width="1.35"></rect><path d="M8.3 5.6V3.7a2.5 2.5 0 0 1 5 0" stroke-width="1.15"></path></g><rect x="5.05" y="8.9" width="2.1" height="2.1" rx="0.6" fill="#62bd5a"></rect></svg><svg class="i" style="left:571.0px;top:146.8px" width="15" height="15" viewBox="0 0 15 15"><g fill="none" stroke="#62bd5a"><rect x="1.65" y="5.9" width="8.9" height="8.1" rx="0.8" stroke-width="1.35"></rect><path d="M8.3 5.6V3.7a2.5 2.5 0 0 1 5 0" stroke-width="1.15"></path></g><rect x="5.05" y="8.9" width="2.1" height="2.1" rx="0.6" fill="#62bd5a"></rect></svg><svg class="i" style="left:705.2px;top:146.8px" width="15" height="15" viewBox="0 0 15 15"><g fill="none" stroke="#62bd5a"><rect x="1.65" y="5.9" width="8.9" height="8.1" rx="0.8" stroke-width="1.35"></rect><path d="M8.3 5.6V3.7a2.5 2.5 0 0 1 5 0" stroke-width="1.15"></path></g><rect x="5.05" y="8.9" width="2.1" height="2.1" rx="0.6" fill="#62bd5a"></rect></svg><svg class="i" style="left:857px;top:148.7px" width="15" height="12.4" viewBox="0 0 15 12.4"><path fill="#dc3545" d="M7.5 0.3L14.7 12.1H0.3z"></path><rect x="6.8" y="4.4" width="1.4" height="3.6" fill="#fff"></rect><rect x="6.8" y="9.1" width="1.4" height="1.5" fill="#fff"></rect></svg><span class="t" style="top: 149px; font-size: 12.7px; color: rgb(107, 154, 203); line-height: 12.7px; left: 850px; width: 300px; text-align: center; letter-spacing: 0px;">0</span><span class="t" style="top: 149px; font-size: 12.7px; color: rgb(107, 154, 203); line-height: 12.7px; left: 967px; width: 300px; text-align: center; letter-spacing: 0px;">2</span><span class="t" style="top: 149px; font-size: 12.77px; color: rgb(107, 154, 203); line-height: 12.77px; left: 1093px; width: 300px; text-align: center; letter-spacing: -0.003px;">14</span><span class="t" style="top: 149px; font-size: 12.7px; color: rgb(107, 154, 203); line-height: 12.7px; left: 1236.8px; width: 300px; text-align: center; letter-spacing: 0px;">0</span><svg class="i" style="left:1505.8px;top:147.89999999999998px" width="14" height="14" viewBox="0 0 14 14"><circle cx="7" cy="7" r="6.8" fill="#62bd5a"></circle><path fill="none" stroke="#fff" stroke-width="1.3" d="M3.1 7.1l2.7 2.8 5.2-5.3"></path></svg><div style="left:8px;top:181px;width:21px;height:22px;background:#fff;border:1px solid #bcc4cd;border-radius:3px;box-sizing:border-box;"></div><span class="t" style="top: 187px; font-size: 12.77px; color: rgb(107, 154, 203); line-height: 12.77px; left: 58.3px; letter-spacing: -0.006px;">225</span><span class="t" style="top: 187.01px; font-size: 12.36px; color: rgb(107, 154, 203); line-height: 12.36px; left: 167.3px; letter-spacing: 0px;">Soziale Einrichtungen GmbH</span><svg class="i" style="left:463.4px;top:184.8px" width="15" height="15" viewBox="0 0 15 15"><g fill="none" stroke="#62bd5a"><rect x="1.65" y="5.9" width="8.9" height="8.1" rx="0.8" stroke-width="1.35"></rect><path d="M8.3 5.6V3.7a2.5 2.5 0 0 1 5 0" stroke-width="1.15"></path></g><rect x="5.05" y="8.9" width="2.1" height="2.1" rx="0.6" fill="#62bd5a"></rect></svg><svg class="i" style="left:571.0px;top:184.8px" width="15" height="15" viewBox="0 0 15 15"><g fill="none" stroke="#62bd5a"><rect x="1.65" y="5.9" width="8.9" height="8.1" rx="0.8" stroke-width="1.35"></rect><path d="M8.3 5.6V3.7a2.5 2.5 0 0 1 5 0" stroke-width="1.15"></path></g><rect x="5.05" y="8.9" width="2.1" height="2.1" rx="0.6" fill="#62bd5a"></rect></svg><svg class="i" style="left:705.2px;top:184.8px" width="15" height="15" viewBox="0 0 15 15"><g fill="none" stroke="#62bd5a"><rect x="1.65" y="5.9" width="8.9" height="8.1" rx="0.8" stroke-width="1.35"></rect><path d="M8.3 5.6V3.7a2.5 2.5 0 0 1 5 0" stroke-width="1.15"></path></g><rect x="5.05" y="8.9" width="2.1" height="2.1" rx="0.6" fill="#62bd5a"></rect></svg><svg class="i" style="left:857px;top:186.7px" width="15" height="12.4" viewBox="0 0 15 12.4"><path fill="#dc3545" d="M7.5 0.3L14.7 12.1H0.3z"></path><rect x="6.8" y="4.4" width="1.4" height="3.6" fill="#fff"></rect><rect x="6.8" y="9.1" width="1.4" height="1.5" fill="#fff"></rect></svg><span class="t" style="top: 187px; font-size: 12.7px; color: rgb(107, 154, 203); line-height: 12.7px; left: 850px; width: 300px; text-align: center; letter-spacing: 0px;">0</span><span class="t" style="top: 187px; font-size: 12.7px; color: rgb(107, 154, 203); line-height: 12.7px; left: 967px; width: 300px; text-align: center; letter-spacing: 0px;">2</span><span class="t" style="top: 187px; font-size: 12.7px; color: rgb(107, 154, 203); line-height: 12.7px; left: 1093px; width: 300px; text-align: center; letter-spacing: 0px;">9</span><span class="t" style="top: 187px; font-size: 12.77px; color: rgb(107, 154, 203); line-height: 12.77px; left: 1236.8px; width: 300px; text-align: center; letter-spacing: -0.003px;">24</span><svg class="i" style="left:1505.8px;top:185.89999999999998px" width="14" height="14" viewBox="0 0 14 14"><circle cx="7" cy="7" r="6.8" fill="#62bd5a"></circle><path fill="none" stroke="#fff" stroke-width="1.3" d="M3.1 7.1l2.7 2.8 5.2-5.3"></path></svg><div style="left:0px;top:211px;width:1571px;height:38px;background:#eef2f6;"></div><div style="left:8px;top:219px;width:21px;height:22px;background:#fff;border:1px solid #bcc4cd;border-radius:3px;box-sizing:border-box;"></div><span class="t" style="top: 225px; font-size: 12.77px; color: rgb(107, 154, 203); line-height: 12.77px; left: 58.3px; letter-spacing: -0.006px;">226</span><span class="t" style="top: 225.01px; font-size: 12.53px; color: rgb(107, 154, 203); line-height: 12.53px; left: 167.3px; letter-spacing: 0.005px;">Klinikum GmbH</span><svg class="i" style="left:463.4px;top:222.8px" width="15" height="15" viewBox="0 0 15 15"><g fill="none" stroke="#62bd5a"><rect x="1.65" y="5.9" width="8.9" height="8.1" rx="0.8" stroke-width="1.35"></rect><path d="M8.3 5.6V3.7a2.5 2.5 0 0 1 5 0" stroke-width="1.15"></path></g><rect x="5.05" y="8.9" width="2.1" height="2.1" rx="0.6" fill="#62bd5a"></rect></svg><svg class="i" style="left:571.0px;top:222.8px" width="15" height="15" viewBox="0 0 15 15"><g fill="none" stroke="#62bd5a"><rect x="1.65" y="5.9" width="8.9" height="8.1" rx="0.8" stroke-width="1.35"></rect><path d="M8.3 5.6V3.7a2.5 2.5 0 0 1 5 0" stroke-width="1.15"></path></g><rect x="5.05" y="8.9" width="2.1" height="2.1" rx="0.6" fill="#62bd5a"></rect></svg><svg class="i" style="left:705.2px;top:222.8px" width="15" height="15" viewBox="0 0 15 15"><g fill="none" stroke="#62bd5a"><rect x="1.65" y="5.9" width="8.9" height="8.1" rx="0.8" stroke-width="1.35"></rect><path d="M8.3 5.6V3.7a2.5 2.5 0 0 1 5 0" stroke-width="1.15"></path></g><rect x="5.05" y="8.9" width="2.1" height="2.1" rx="0.6" fill="#62bd5a"></rect></svg><svg class="i" style="left:857px;top:224.7px" width="15" height="12.4" viewBox="0 0 15 12.4"><path fill="#dc3545" d="M7.5 0.3L14.7 12.1H0.3z"></path><rect x="6.8" y="4.4" width="1.4" height="3.6" fill="#fff"></rect><rect x="6.8" y="9.1" width="1.4" height="1.5" fill="#fff"></rect></svg><span class="t" style="top: 225px; font-size: 12.7px; color: rgb(107, 154, 203); line-height: 12.7px; left: 850px; width: 300px; text-align: center; letter-spacing: 0px;">0</span><span class="t" style="top: 225px; font-size: 12.7px; color: rgb(107, 154, 203); line-height: 12.7px; left: 967px; width: 300px; text-align: center; letter-spacing: 0px;">2</span><span class="t" style="top: 225px; font-size: 12.7px; color: rgb(107, 154, 203); line-height: 12.7px; left: 1093px; width: 300px; text-align: center; letter-spacing: 0px;">9</span><span class="t" style="top: 225px; font-size: 12.77px; color: rgb(107, 154, 203); line-height: 12.77px; left: 1236.8px; width: 300px; text-align: center; letter-spacing: -0.003px;">24</span><svg class="i" style="left:1505.8px;top:223.89999999999998px" width="14" height="14" viewBox="0 0 14 14"><circle cx="7" cy="7" r="6.8" fill="#62bd5a"></circle><path fill="none" stroke="#fff" stroke-width="1.3" d="M3.1 7.1l2.7 2.8 5.2-5.3"></path></svg><div style="left:8px;top:257px;width:21px;height:22px;background:#fff;border:1px solid #bcc4cd;border-radius:3px;box-sizing:border-box;"></div><span class="t" style="top: 263px; font-size: 12.77px; color: rgb(107, 154, 203); line-height: 12.77px; left: 58.3px; letter-spacing: -0.006px;">400</span><span class="t" style="top: 263.01px; font-size: 12.16px; color: rgb(107, 154, 203); line-height: 12.16px; left: 167.3px; letter-spacing: 0.001px;">Müller &amp; Meier GmbH &amp; Co. KG</span><svg class="i" style="left:463.4px;top:260.8px" width="15" height="15" viewBox="0 0 15 15"><g fill="none" stroke="#62bd5a"><rect x="1.65" y="5.9" width="8.9" height="8.1" rx="0.8" stroke-width="1.35"></rect><path d="M8.3 5.6V3.7a2.5 2.5 0 0 1 5 0" stroke-width="1.15"></path></g><rect x="5.05" y="8.9" width="2.1" height="2.1" rx="0.6" fill="#62bd5a"></rect></svg><svg class="i" style="left:571.0px;top:260.8px" width="15" height="15" viewBox="0 0 15 15"><g fill="none" stroke="#62bd5a"><rect x="1.65" y="5.9" width="8.9" height="8.1" rx="0.8" stroke-width="1.35"></rect><path d="M8.3 5.6V3.7a2.5 2.5 0 0 1 5 0" stroke-width="1.15"></path></g><rect x="5.05" y="8.9" width="2.1" height="2.1" rx="0.6" fill="#62bd5a"></rect></svg><svg class="i" style="left:705.2px;top:260.8px" width="15" height="15" viewBox="0 0 15 15"><g fill="none" stroke="#62bd5a"><rect x="1.65" y="5.9" width="8.9" height="8.1" rx="0.8" stroke-width="1.35"></rect><path d="M8.3 5.6V3.7a2.5 2.5 0 0 1 5 0" stroke-width="1.15"></path></g><rect x="5.05" y="8.9" width="2.1" height="2.1" rx="0.6" fill="#62bd5a"></rect></svg><svg class="i" style="left:858px;top:261.9px" width="14" height="14" viewBox="0 0 14 14"><circle cx="7" cy="7" r="6.8" fill="#62bd5a"></circle><path fill="none" stroke="#fff" stroke-width="1.3" d="M3.1 7.1l2.7 2.8 5.2-5.3"></path></svg><span class="t" style="top: 263px; font-size: 12.7px; color: rgb(107, 154, 203); line-height: 12.7px; left: 850px; width: 300px; text-align: center; letter-spacing: 0px;">0</span><span class="t" style="top: 263px; font-size: 12.7px; color: rgb(107, 154, 203); line-height: 12.7px; left: 967px; width: 300px; text-align: center; letter-spacing: 0px;">0</span><span class="t" style="top: 263px; font-size: 12.7px; color: rgb(107, 154, 203); line-height: 12.7px; left: 1093px; width: 300px; text-align: center; letter-spacing: 0px;">0</span><span class="t" style="top: 263px; font-size: 12.7px; color: rgb(107, 154, 203); line-height: 12.7px; left: 1236.8px; width: 300px; text-align: center; letter-spacing: 0px;">0</span><svg class="i" style="left:1505.8px;top:261.9px" width="14" height="14" viewBox="0 0 14 14"><circle cx="7" cy="7" r="6.8" fill="#62bd5a"></circle><path fill="none" stroke="#fff" stroke-width="1.3" d="M3.1 7.1l2.7 2.8 5.2-5.3"></path></svg><div style="left:0px;top:287px;width:1571px;height:38px;background:#eef2f6;"></div><div style="left:8px;top:295px;width:21px;height:22px;background:#fff;border:1px solid #bcc4cd;border-radius:3px;box-sizing:border-box;"></div><span class="t" style="top: 301px; font-size: 12.77px; color: rgb(107, 154, 203); line-height: 12.77px; left: 58.3px; letter-spacing: -0.006px;">799</span><span class="t" style="top: 301.01px; font-size: 12.42px; color: rgb(107, 154, 203); line-height: 12.42px; left: 167.3px; letter-spacing: 0.006px;">Stammdaten - Konzern</span><svg class="i" style="left:463.1px;top:299.4px" width="12" height="15" viewBox="0 0 12 15"><path fill="#dc3545" d="M1.9 5.6h8.2a1 1 0 0 1 1 1v7.1a1 1 0 0 1-1 1H1.9a1 1 0 0 1-1-1V6.6a1 1 0 0 1 1-1z"></path><path fill="none" stroke="#dc3545" stroke-width="1.35" d="M3.4 6V4.1a2.6 2.6 0 0 1 5.2 0V6"></path><rect x="4.9" y="9" width="2.2" height="2.2" rx="0.5" fill="#fff"></rect></svg><svg class="i" style="left:570.7px;top:299.4px" width="12" height="15" viewBox="0 0 12 15"><path fill="#dc3545" d="M1.9 5.6h8.2a1 1 0 0 1 1 1v7.1a1 1 0 0 1-1 1H1.9a1 1 0 0 1-1-1V6.6a1 1 0 0 1 1-1z"></path><path fill="none" stroke="#dc3545" stroke-width="1.35" d="M3.4 6V4.1a2.6 2.6 0 0 1 5.2 0V6"></path><rect x="4.9" y="9" width="2.2" height="2.2" rx="0.5" fill="#fff"></rect></svg><svg class="i" style="left:704.9000000000001px;top:299.4px" width="12" height="15" viewBox="0 0 12 15"><path fill="#dc3545" d="M1.9 5.6h8.2a1 1 0 0 1 1 1v7.1a1 1 0 0 1-1 1H1.9a1 1 0 0 1-1-1V6.6a1 1 0 0 1 1-1z"></path><path fill="none" stroke="#dc3545" stroke-width="1.35" d="M3.4 6V4.1a2.6 2.6 0 0 1 5.2 0V6"></path><rect x="4.9" y="9" width="2.2" height="2.2" rx="0.5" fill="#fff"></rect></svg><svg class="i" style="left:858px;top:299.9px" width="14" height="14" viewBox="0 0 14 14"><circle cx="7" cy="7" r="6.8" fill="#62bd5a"></circle><path fill="none" stroke="#fff" stroke-width="1.3" d="M3.1 7.1l2.7 2.8 5.2-5.3"></path></svg><span class="t" style="top: 301px; font-size: 12.7px; color: rgb(107, 154, 203); line-height: 12.7px; left: 850px; width: 300px; text-align: center; letter-spacing: 0px;">0</span><span class="t" style="top: 301px; font-size: 12.7px; color: rgb(107, 154, 203); line-height: 12.7px; left: 967px; width: 300px; text-align: center; letter-spacing: 0px;">0</span><span class="t" style="top: 301px; font-size: 12.7px; color: rgb(107, 154, 203); line-height: 12.7px; left: 1093px; width: 300px; text-align: center; letter-spacing: 0px;">0</span><span class="t" style="top: 301px; font-size: 12.7px; color: rgb(107, 154, 203); line-height: 12.7px; left: 1236.8px; width: 300px; text-align: center; letter-spacing: 0px;">0</span><svg class="i" style="left:1505.8px;top:299.9px" width="14" height="14" viewBox="0 0 14 14"><circle cx="7" cy="7" r="6.8" fill="#62bd5a"></circle><path fill="none" stroke="#fff" stroke-width="1.3" d="M3.1 7.1l2.7 2.8 5.2-5.3"></path></svg><div style="left:8px;top:333px;width:21px;height:22px;background:#fff;border:1px solid #bcc4cd;border-radius:3px;box-sizing:border-box;"></div><span class="t" style="top: 339px; font-size: 12.77px; color: rgb(107, 154, 203); line-height: 12.77px; left: 58.3px; letter-spacing: -0.006px;">800</span><span class="t" style="top: 339.01px; font-size: 12.95px; color: rgb(107, 154, 203); line-height: 12.95px; left: 167.3px; letter-spacing: 0.006px;">Mutter</span><svg class="i" style="left:463.4px;top:336.80000000000007px" width="15" height="15" viewBox="0 0 15 15"><g fill="none" stroke="#62bd5a"><rect x="1.65" y="5.9" width="8.9" height="8.1" rx="0.8" stroke-width="1.35"></rect><path d="M8.3 5.6V3.7a2.5 2.5 0 0 1 5 0" stroke-width="1.15"></path></g><rect x="5.05" y="8.9" width="2.1" height="2.1" rx="0.6" fill="#62bd5a"></rect></svg><svg class="i" style="left:571.0px;top:336.80000000000007px" width="15" height="15" viewBox="0 0 15 15"><g fill="none" stroke="#62bd5a"><rect x="1.65" y="5.9" width="8.9" height="8.1" rx="0.8" stroke-width="1.35"></rect><path d="M8.3 5.6V3.7a2.5 2.5 0 0 1 5 0" stroke-width="1.15"></path></g><rect x="5.05" y="8.9" width="2.1" height="2.1" rx="0.6" fill="#62bd5a"></rect></svg><svg class="i" style="left:705.2px;top:336.80000000000007px" width="15" height="15" viewBox="0 0 15 15"><g fill="none" stroke="#62bd5a"><rect x="1.65" y="5.9" width="8.9" height="8.1" rx="0.8" stroke-width="1.35"></rect><path d="M8.3 5.6V3.7a2.5 2.5 0 0 1 5 0" stroke-width="1.15"></path></g><rect x="5.05" y="8.9" width="2.1" height="2.1" rx="0.6" fill="#62bd5a"></rect></svg><svg class="i" style="left:858px;top:337.9000000000001px" width="14" height="14" viewBox="0 0 14 14"><circle cx="7" cy="7" r="6.8" fill="#62bd5a"></circle><path fill="none" stroke="#fff" stroke-width="1.3" d="M3.1 7.1l2.7 2.8 5.2-5.3"></path></svg><span class="t" style="top: 339px; font-size: 12.7px; color: rgb(107, 154, 203); line-height: 12.7px; left: 850px; width: 300px; text-align: center; letter-spacing: 0px;">0</span><span class="t" style="top: 339px; font-size: 12.7px; color: rgb(107, 154, 203); line-height: 12.7px; left: 967px; width: 300px; text-align: center; letter-spacing: 0px;">0</span><span class="t" style="top: 339px; font-size: 12.7px; color: rgb(107, 154, 203); line-height: 12.7px; left: 1093px; width: 300px; text-align: center; letter-spacing: 0px;">2</span><span class="t" style="top: 339px; font-size: 12.7px; color: rgb(107, 154, 203); line-height: 12.7px; left: 1236.8px; width: 300px; text-align: center; letter-spacing: 0px;">0</span><svg class="i" style="left:1505.8px;top:337.9000000000001px" width="14" height="14" viewBox="0 0 14 14"><circle cx="7" cy="7" r="6.8" fill="#62bd5a"></circle><path fill="none" stroke="#fff" stroke-width="1.3" d="M3.1 7.1l2.7 2.8 5.2-5.3"></path></svg><div style="left:0px;top:363px;width:1571px;height:38px;background:#eef2f6;"></div><div style="left:8px;top:371px;width:21px;height:22px;background:#fff;border:1px solid #bcc4cd;border-radius:3px;box-sizing:border-box;"></div><span class="t" style="top: 377px; font-size: 12.77px; color: rgb(107, 154, 203); line-height: 12.77px; left: 58.3px; letter-spacing: -0.006px;">810</span><span class="t" style="top: 377.01px; font-size: 12.63px; color: rgb(107, 154, 203); line-height: 12.63px; left: 167.3px; letter-spacing: 0.001px;">Tochter GmbH</span><svg class="i" style="left:463.4px;top:374.80000000000007px" width="15" height="15" viewBox="0 0 15 15"><g fill="none" stroke="#62bd5a"><rect x="1.65" y="5.9" width="8.9" height="8.1" rx="0.8" stroke-width="1.35"></rect><path d="M8.3 5.6V3.7a2.5 2.5 0 0 1 5 0" stroke-width="1.15"></path></g><rect x="5.05" y="8.9" width="2.1" height="2.1" rx="0.6" fill="#62bd5a"></rect></svg><svg class="i" style="left:571.0px;top:374.80000000000007px" width="15" height="15" viewBox="0 0 15 15"><g fill="none" stroke="#62bd5a"><rect x="1.65" y="5.9" width="8.9" height="8.1" rx="0.8" stroke-width="1.35"></rect><path d="M8.3 5.6V3.7a2.5 2.5 0 0 1 5 0" stroke-width="1.15"></path></g><rect x="5.05" y="8.9" width="2.1" height="2.1" rx="0.6" fill="#62bd5a"></rect></svg><svg class="i" style="left:705.2px;top:374.80000000000007px" width="15" height="15" viewBox="0 0 15 15"><g fill="none" stroke="#62bd5a"><rect x="1.65" y="5.9" width="8.9" height="8.1" rx="0.8" stroke-width="1.35"></rect><path d="M8.3 5.6V3.7a2.5 2.5 0 0 1 5 0" stroke-width="1.15"></path></g><rect x="5.05" y="8.9" width="2.1" height="2.1" rx="0.6" fill="#62bd5a"></rect></svg><svg class="i" style="left:858px;top:375.9000000000001px" width="14" height="14" viewBox="0 0 14 14"><circle cx="7" cy="7" r="6.8" fill="#62bd5a"></circle><path fill="none" stroke="#fff" stroke-width="1.3" d="M3.1 7.1l2.7 2.8 5.2-5.3"></path></svg><span class="t" style="top: 377px; font-size: 12.7px; color: rgb(107, 154, 203); line-height: 12.7px; left: 850px; width: 300px; text-align: center; letter-spacing: 0px;">0</span><span class="t" style="top: 377px; font-size: 12.7px; color: rgb(107, 154, 203); line-height: 12.7px; left: 967px; width: 300px; text-align: center; letter-spacing: 0px;">0</span><span class="t" style="top: 377px; font-size: 12.7px; color: rgb(107, 154, 203); line-height: 12.7px; left: 1093px; width: 300px; text-align: center; letter-spacing: 0px;">0</span><span class="t" style="top: 377px; font-size: 12.7px; color: rgb(107, 154, 203); line-height: 12.7px; left: 1236.8px; width: 300px; text-align: center; letter-spacing: 0px;">0</span><svg class="i" style="left:1505.8px;top:375.9000000000001px" width="14" height="14" viewBox="0 0 14 14"><circle cx="7" cy="7" r="6.8" fill="#62bd5a"></circle><path fill="none" stroke="#fff" stroke-width="1.3" d="M3.1 7.1l2.7 2.8 5.2-5.3"></path></svg><div style="left:8px;top:409px;width:21px;height:22px;background:#fff;border:1px solid #bcc4cd;border-radius:3px;box-sizing:border-box;"></div><span class="t" style="top: 415px; font-size: 12.77px; color: rgb(107, 154, 203); line-height: 12.77px; left: 58.3px; letter-spacing: -0.006px;">820</span><span class="t" style="top: 415px; font-size: 12.18px; color: rgb(107, 154, 203); line-height: 12.18px; left: 167.3px; letter-spacing: 0.002px;">Sohn GmbH</span><svg class="i" style="left:463.4px;top:412.80000000000007px" width="15" height="15" viewBox="0 0 15 15"><g fill="none" stroke="#62bd5a"><rect x="1.65" y="5.9" width="8.9" height="8.1" rx="0.8" stroke-width="1.35"></rect><path d="M8.3 5.6V3.7a2.5 2.5 0 0 1 5 0" stroke-width="1.15"></path></g><rect x="5.05" y="8.9" width="2.1" height="2.1" rx="0.6" fill="#62bd5a"></rect></svg><svg class="i" style="left:571.0px;top:412.80000000000007px" width="15" height="15" viewBox="0 0 15 15"><g fill="none" stroke="#62bd5a"><rect x="1.65" y="5.9" width="8.9" height="8.1" rx="0.8" stroke-width="1.35"></rect><path d="M8.3 5.6V3.7a2.5 2.5 0 0 1 5 0" stroke-width="1.15"></path></g><rect x="5.05" y="8.9" width="2.1" height="2.1" rx="0.6" fill="#62bd5a"></rect></svg><svg class="i" style="left:705.2px;top:412.80000000000007px" width="15" height="15" viewBox="0 0 15 15"><g fill="none" stroke="#62bd5a"><rect x="1.65" y="5.9" width="8.9" height="8.1" rx="0.8" stroke-width="1.35"></rect><path d="M8.3 5.6V3.7a2.5 2.5 0 0 1 5 0" stroke-width="1.15"></path></g><rect x="5.05" y="8.9" width="2.1" height="2.1" rx="0.6" fill="#62bd5a"></rect></svg><svg class="i" style="left:858px;top:413.9000000000001px" width="14" height="14" viewBox="0 0 14 14"><circle cx="7" cy="7" r="6.8" fill="#62bd5a"></circle><path fill="none" stroke="#fff" stroke-width="1.3" d="M3.1 7.1l2.7 2.8 5.2-5.3"></path></svg><span class="t" style="top: 415px; font-size: 12.7px; color: rgb(107, 154, 203); line-height: 12.7px; left: 850px; width: 300px; text-align: center; letter-spacing: 0px;">0</span><span class="t" style="top: 415px; font-size: 12.7px; color: rgb(107, 154, 203); line-height: 12.7px; left: 967px; width: 300px; text-align: center; letter-spacing: 0px;">0</span><span class="t" style="top: 415px; font-size: 12.7px; color: rgb(107, 154, 203); line-height: 12.7px; left: 1093px; width: 300px; text-align: center; letter-spacing: 0px;">5</span><span class="t" style="top: 415px; font-size: 12.7px; color: rgb(107, 154, 203); line-height: 12.7px; left: 1236.8px; width: 300px; text-align: center; letter-spacing: 0px;">0</span><svg class="i" style="left:1505.8px;top:413.9000000000001px" width="14" height="14" viewBox="0 0 14 14"><circle cx="7" cy="7" r="6.8" fill="#62bd5a"></circle><path fill="none" stroke="#fff" stroke-width="1.3" d="M3.1 7.1l2.7 2.8 5.2-5.3"></path></svg><div style="left:0px;top:439px;width:1571px;height:38px;background:#eef2f6;"></div><div style="left:8px;top:447px;width:21px;height:22px;background:#fff;border:1px solid #bcc4cd;border-radius:3px;box-sizing:border-box;"></div><span class="t" style="top: 453px; font-size: 12.77px; color: rgb(107, 154, 203); line-height: 12.77px; left: 58.3px; letter-spacing: -0.006px;">830</span><span class="t" style="top: 453.01px; font-size: 12.3px; color: rgb(107, 154, 203); line-height: 12.3px; left: 167.3px; letter-spacing: 0px;">Gem. Unternehmen</span><svg class="i" style="left:463.4px;top:450.80000000000007px" width="15" height="15" viewBox="0 0 15 15"><g fill="none" stroke="#62bd5a"><rect x="1.65" y="5.9" width="8.9" height="8.1" rx="0.8" stroke-width="1.35"></rect><path d="M8.3 5.6V3.7a2.5 2.5 0 0 1 5 0" stroke-width="1.15"></path></g><rect x="5.05" y="8.9" width="2.1" height="2.1" rx="0.6" fill="#62bd5a"></rect></svg><svg class="i" style="left:571.0px;top:450.80000000000007px" width="15" height="15" viewBox="0 0 15 15"><g fill="none" stroke="#62bd5a"><rect x="1.65" y="5.9" width="8.9" height="8.1" rx="0.8" stroke-width="1.35"></rect><path d="M8.3 5.6V3.7a2.5 2.5 0 0 1 5 0" stroke-width="1.15"></path></g><rect x="5.05" y="8.9" width="2.1" height="2.1" rx="0.6" fill="#62bd5a"></rect></svg><svg class="i" style="left:705.2px;top:450.80000000000007px" width="15" height="15" viewBox="0 0 15 15"><g fill="none" stroke="#62bd5a"><rect x="1.65" y="5.9" width="8.9" height="8.1" rx="0.8" stroke-width="1.35"></rect><path d="M8.3 5.6V3.7a2.5 2.5 0 0 1 5 0" stroke-width="1.15"></path></g><rect x="5.05" y="8.9" width="2.1" height="2.1" rx="0.6" fill="#62bd5a"></rect></svg><svg class="i" style="left:858px;top:451.9000000000001px" width="14" height="14" viewBox="0 0 14 14"><circle cx="7" cy="7" r="6.8" fill="#62bd5a"></circle><path fill="none" stroke="#fff" stroke-width="1.3" d="M3.1 7.1l2.7 2.8 5.2-5.3"></path></svg><span class="t" style="top: 453px; font-size: 12.7px; color: rgb(107, 154, 203); line-height: 12.7px; left: 850px; width: 300px; text-align: center; letter-spacing: 0px;">0</span><span class="t" style="top: 453px; font-size: 12.7px; color: rgb(107, 154, 203); line-height: 12.7px; left: 967px; width: 300px; text-align: center; letter-spacing: 0px;">0</span><span class="t" style="top: 453px; font-size: 12.7px; color: rgb(107, 154, 203); line-height: 12.7px; left: 1093px; width: 300px; text-align: center; letter-spacing: 0px;">0</span><span class="t" style="top: 453px; font-size: 12.7px; color: rgb(107, 154, 203); line-height: 12.7px; left: 1236.8px; width: 300px; text-align: center; letter-spacing: 0px;">0</span><svg class="i" style="left:1505.8px;top:451.9000000000001px" width="14" height="14" viewBox="0 0 14 14"><circle cx="7" cy="7" r="6.8" fill="#62bd5a"></circle><path fill="none" stroke="#fff" stroke-width="1.3" d="M3.1 7.1l2.7 2.8 5.2-5.3"></path></svg><div style="left:8px;top:485px;width:21px;height:22px;background:#fff;border:1px solid #bcc4cd;border-radius:3px;box-sizing:border-box;"></div><span class="t" style="top: 491px; font-size: 12.77px; color: rgb(107, 154, 203); line-height: 12.77px; left: 58.3px; letter-spacing: -0.006px;">840</span><span class="t" style="top: 491.01px; font-size: 12.5px; color: rgb(107, 154, 203); line-height: 12.5px; left: 167.3px; letter-spacing: -0.002px;">Assoz. Unternehmen</span><svg class="i" style="left:463.4px;top:488.80000000000007px" width="15" height="15" viewBox="0 0 15 15"><g fill="none" stroke="#62bd5a"><rect x="1.65" y="5.9" width="8.9" height="8.1" rx="0.8" stroke-width="1.35"></rect><path d="M8.3 5.6V3.7a2.5 2.5 0 0 1 5 0" stroke-width="1.15"></path></g><rect x="5.05" y="8.9" width="2.1" height="2.1" rx="0.6" fill="#62bd5a"></rect></svg><svg class="i" style="left:571.0px;top:488.80000000000007px" width="15" height="15" viewBox="0 0 15 15"><g fill="none" stroke="#62bd5a"><rect x="1.65" y="5.9" width="8.9" height="8.1" rx="0.8" stroke-width="1.35"></rect><path d="M8.3 5.6V3.7a2.5 2.5 0 0 1 5 0" stroke-width="1.15"></path></g><rect x="5.05" y="8.9" width="2.1" height="2.1" rx="0.6" fill="#62bd5a"></rect></svg><svg class="i" style="left:705.2px;top:488.80000000000007px" width="15" height="15" viewBox="0 0 15 15"><g fill="none" stroke="#62bd5a"><rect x="1.65" y="5.9" width="8.9" height="8.1" rx="0.8" stroke-width="1.35"></rect><path d="M8.3 5.6V3.7a2.5 2.5 0 0 1 5 0" stroke-width="1.15"></path></g><rect x="5.05" y="8.9" width="2.1" height="2.1" rx="0.6" fill="#62bd5a"></rect></svg><svg class="i" style="left:858px;top:489.9000000000001px" width="14" height="14" viewBox="0 0 14 14"><circle cx="7" cy="7" r="6.8" fill="#62bd5a"></circle><path fill="none" stroke="#fff" stroke-width="1.3" d="M3.1 7.1l2.7 2.8 5.2-5.3"></path></svg><span class="t" style="top: 491px; font-size: 12.7px; color: rgb(107, 154, 203); line-height: 12.7px; left: 850px; width: 300px; text-align: center; letter-spacing: 0px;">0</span><span class="t" style="top: 491px; font-size: 12.7px; color: rgb(107, 154, 203); line-height: 12.7px; left: 967px; width: 300px; text-align: center; letter-spacing: 0px;">0</span><span class="t" style="top: 491px; font-size: 12.7px; color: rgb(107, 154, 203); line-height: 12.7px; left: 1093px; width: 300px; text-align: center; letter-spacing: 0px;">0</span><span class="t" style="top: 491px; font-size: 12.7px; color: rgb(107, 154, 203); line-height: 12.7px; left: 1236.8px; width: 300px; text-align: center; letter-spacing: 0px;">0</span><svg class="i" style="left:1505.8px;top:489.9000000000001px" width="14" height="14" viewBox="0 0 14 14"><circle cx="7" cy="7" r="6.8" fill="#62bd5a"></circle><path fill="none" stroke="#fff" stroke-width="1.3" d="M3.1 7.1l2.7 2.8 5.2-5.3"></path></svg><div style="left:0px;top:515px;width:1571px;height:38px;background:#eef2f6;"></div><div style="left:8px;top:523px;width:21px;height:22px;background:#fff;border:1px solid #bcc4cd;border-radius:3px;box-sizing:border-box;"></div><span class="t" style="top: 529px; font-size: 12.77px; color: rgb(107, 154, 203); line-height: 12.77px; left: 58.3px; letter-spacing: -0.006px;">888</span><span class="t" style="top: 529px; font-size: 12.47px; color: rgb(107, 154, 203); line-height: 12.47px; left: 167.3px; letter-spacing: -0.003px;">KM</span><svg class="i" style="left:463.4px;top:526.8000000000001px" width="15" height="15" viewBox="0 0 15 15"><g fill="none" stroke="#62bd5a"><rect x="1.65" y="5.9" width="8.9" height="8.1" rx="0.8" stroke-width="1.35"></rect><path d="M8.3 5.6V3.7a2.5 2.5 0 0 1 5 0" stroke-width="1.15"></path></g><rect x="5.05" y="8.9" width="2.1" height="2.1" rx="0.6" fill="#62bd5a"></rect></svg><svg class="i" style="left:571.0px;top:526.8000000000001px" width="15" height="15" viewBox="0 0 15 15"><g fill="none" stroke="#62bd5a"><rect x="1.65" y="5.9" width="8.9" height="8.1" rx="0.8" stroke-width="1.35"></rect><path d="M8.3 5.6V3.7a2.5 2.5 0 0 1 5 0" stroke-width="1.15"></path></g><rect x="5.05" y="8.9" width="2.1" height="2.1" rx="0.6" fill="#62bd5a"></rect></svg><svg class="i" style="left:705.2px;top:526.8000000000001px" width="15" height="15" viewBox="0 0 15 15"><g fill="none" stroke="#62bd5a"><rect x="1.65" y="5.9" width="8.9" height="8.1" rx="0.8" stroke-width="1.35"></rect><path d="M8.3 5.6V3.7a2.5 2.5 0 0 1 5 0" stroke-width="1.15"></path></g><rect x="5.05" y="8.9" width="2.1" height="2.1" rx="0.6" fill="#62bd5a"></rect></svg><svg class="i" style="left:858px;top:527.9000000000001px" width="14" height="14" viewBox="0 0 14 14"><circle cx="7" cy="7" r="6.8" fill="#62bd5a"></circle><path fill="none" stroke="#fff" stroke-width="1.3" d="M3.1 7.1l2.7 2.8 5.2-5.3"></path></svg><span class="t" style="top: 529px; font-size: 12.7px; color: rgb(107, 154, 203); line-height: 12.7px; left: 850px; width: 300px; text-align: center; letter-spacing: 0px;">0</span><span class="t" style="top: 529px; font-size: 12.7px; color: rgb(107, 154, 203); line-height: 12.7px; left: 967px; width: 300px; text-align: center; letter-spacing: 0px;">0</span><span class="t" style="top: 529px; font-size: 12.7px; color: rgb(107, 154, 203); line-height: 12.7px; left: 1093px; width: 300px; text-align: center; letter-spacing: 0px;">0</span><span class="t" style="top: 529px; font-size: 12.7px; color: rgb(107, 154, 203); line-height: 12.7px; left: 1236.8px; width: 300px; text-align: center; letter-spacing: 0px;">0</span><svg class="i" style="left:1505.8px;top:527.9000000000001px" width="14" height="14" viewBox="0 0 14 14"><circle cx="7" cy="7" r="6.8" fill="#62bd5a"></circle><path fill="none" stroke="#fff" stroke-width="1.3" d="M3.1 7.1l2.7 2.8 5.2-5.3"></path></svg><div style="left:8px;top:561px;width:21px;height:22px;background:#fff;border:1px solid #bcc4cd;border-radius:3px;box-sizing:border-box;"></div><span class="t" style="top: 567px; font-size: 12.77px; color: rgb(107, 154, 203); line-height: 12.77px; left: 58.3px; letter-spacing: -0.006px;">900</span><span class="t" style="top: 567.01px; font-size: 12.37px; color: rgb(107, 154, 203); line-height: 12.37px; left: 167.3px; letter-spacing: 0.005px;">Kons 888 + 950</span><svg class="i" style="left:463.4px;top:564.8000000000001px" width="15" height="15" viewBox="0 0 15 15"><g fill="none" stroke="#62bd5a"><rect x="1.65" y="5.9" width="8.9" height="8.1" rx="0.8" stroke-width="1.35"></rect><path d="M8.3 5.6V3.7a2.5 2.5 0 0 1 5 0" stroke-width="1.15"></path></g><rect x="5.05" y="8.9" width="2.1" height="2.1" rx="0.6" fill="#62bd5a"></rect></svg><svg class="i" style="left:570.7px;top:565.4000000000001px" width="12" height="15" viewBox="0 0 12 15"><path fill="#dc3545" d="M1.9 5.6h8.2a1 1 0 0 1 1 1v7.1a1 1 0 0 1-1 1H1.9a1 1 0 0 1-1-1V6.6a1 1 0 0 1 1-1z"></path><path fill="none" stroke="#dc3545" stroke-width="1.35" d="M3.4 6V4.1a2.6 2.6 0 0 1 5.2 0V6"></path><rect x="4.9" y="9" width="2.2" height="2.2" rx="0.5" fill="#fff"></rect></svg><svg class="i" style="left:705.2px;top:564.8000000000001px" width="15" height="15" viewBox="0 0 15 15"><g fill="none" stroke="#62bd5a"><rect x="1.65" y="5.9" width="8.9" height="8.1" rx="0.8" stroke-width="1.35"></rect><path d="M8.3 5.6V3.7a2.5 2.5 0 0 1 5 0" stroke-width="1.15"></path></g><rect x="5.05" y="8.9" width="2.1" height="2.1" rx="0.6" fill="#62bd5a"></rect></svg><svg class="i" style="left:858px;top:565.9000000000001px" width="14" height="14" viewBox="0 0 14 14"><circle cx="7" cy="7" r="6.8" fill="#62bd5a"></circle><path fill="none" stroke="#fff" stroke-width="1.3" d="M3.1 7.1l2.7 2.8 5.2-5.3"></path></svg><span class="t" style="top: 567px; font-size: 12.7px; color: rgb(107, 154, 203); line-height: 12.7px; left: 850px; width: 300px; text-align: center; letter-spacing: 0px;">0</span><span class="t" style="top: 567px; font-size: 12.7px; color: rgb(107, 154, 203); line-height: 12.7px; left: 967px; width: 300px; text-align: center; letter-spacing: 0px;">0</span><span class="t" style="top: 567px; font-size: 12.7px; color: rgb(107, 154, 203); line-height: 12.7px; left: 1093px; width: 300px; text-align: center; letter-spacing: 0px;">0</span><span class="t" style="top: 567px; font-size: 12.7px; color: rgb(107, 154, 203); line-height: 12.7px; left: 1236.8px; width: 300px; text-align: center; letter-spacing: 0px;">0</span><svg class="i" style="left:1505.8px;top:565.9000000000001px" width="14" height="14" viewBox="0 0 14 14"><circle cx="7" cy="7" r="6.8" fill="#62bd5a"></circle><path fill="none" stroke="#fff" stroke-width="1.3" d="M3.1 7.1l2.7 2.8 5.2-5.3"></path></svg><div style="left:0px;top:591px;width:1571px;height:38px;background:#eef2f6;"></div><div style="left:8px;top:599px;width:21px;height:22px;background:#fff;border:1px solid #bcc4cd;border-radius:3px;box-sizing:border-box;"></div><span class="t" style="top: 605px; font-size: 12.77px; color: rgb(107, 154, 203); line-height: 12.77px; left: 58.3px; letter-spacing: -0.006px;">930</span><span class="t" style="top: 605.01px; font-size: 12.46px; color: rgb(107, 154, 203); line-height: 12.46px; left: 167.3px; letter-spacing: 0.002px;">Muster KoBu</span><svg class="i" style="left:463.4px;top:602.8000000000001px" width="15" height="15" viewBox="0 0 15 15"><g fill="none" stroke="#62bd5a"><rect x="1.65" y="5.9" width="8.9" height="8.1" rx="0.8" stroke-width="1.35"></rect><path d="M8.3 5.6V3.7a2.5 2.5 0 0 1 5 0" stroke-width="1.15"></path></g><rect x="5.05" y="8.9" width="2.1" height="2.1" rx="0.6" fill="#62bd5a"></rect></svg><svg class="i" style="left:571.0px;top:602.8000000000001px" width="15" height="15" viewBox="0 0 15 15"><g fill="none" stroke="#62bd5a"><rect x="1.65" y="5.9" width="8.9" height="8.1" rx="0.8" stroke-width="1.35"></rect><path d="M8.3 5.6V3.7a2.5 2.5 0 0 1 5 0" stroke-width="1.15"></path></g><rect x="5.05" y="8.9" width="2.1" height="2.1" rx="0.6" fill="#62bd5a"></rect></svg><svg class="i" style="left:705.2px;top:602.8000000000001px" width="15" height="15" viewBox="0 0 15 15"><g fill="none" stroke="#62bd5a"><rect x="1.65" y="5.9" width="8.9" height="8.1" rx="0.8" stroke-width="1.35"></rect><path d="M8.3 5.6V3.7a2.5 2.5 0 0 1 5 0" stroke-width="1.15"></path></g><rect x="5.05" y="8.9" width="2.1" height="2.1" rx="0.6" fill="#62bd5a"></rect></svg><svg class="i" style="left:858px;top:603.9000000000001px" width="14" height="14" viewBox="0 0 14 14"><circle cx="7" cy="7" r="6.8" fill="#62bd5a"></circle><path fill="none" stroke="#fff" stroke-width="1.3" d="M3.1 7.1l2.7 2.8 5.2-5.3"></path></svg><span class="t" style="top: 605px; font-size: 12.7px; color: rgb(107, 154, 203); line-height: 12.7px; left: 850px; width: 300px; text-align: center; letter-spacing: 0px;">0</span><span class="t" style="top: 605px; font-size: 12.7px; color: rgb(107, 154, 203); line-height: 12.7px; left: 967px; width: 300px; text-align: center; letter-spacing: 0px;">0</span><span class="t" style="top: 605px; font-size: 12.7px; color: rgb(107, 154, 203); line-height: 12.7px; left: 1093px; width: 300px; text-align: center; letter-spacing: 0px;">0</span><span class="t" style="top: 605px; font-size: 12.7px; color: rgb(107, 154, 203); line-height: 12.7px; left: 1236.8px; width: 300px; text-align: center; letter-spacing: 0px;">0</span><svg class="i" style="left:1505.8px;top:603.9000000000001px" width="14" height="14" viewBox="0 0 14 14"><circle cx="7" cy="7" r="6.8" fill="#62bd5a"></circle><path fill="none" stroke="#fff" stroke-width="1.3" d="M3.1 7.1l2.7 2.8 5.2-5.3"></path></svg><div style="left:8px;top:637px;width:21px;height:22px;background:#fff;border:1px solid #bcc4cd;border-radius:3px;box-sizing:border-box;"></div><span class="t" style="top: 643px; font-size: 12.77px; color: rgb(107, 154, 203); line-height: 12.77px; left: 58.3px; letter-spacing: -0.006px;">940</span><span class="t" style="top: 643.01px; font-size: 12.46px; color: rgb(107, 154, 203); line-height: 12.46px; left: 167.3px; letter-spacing: 0.002px;">Muster KoBu</span><svg class="i" style="left:463.4px;top:640.8000000000001px" width="15" height="15" viewBox="0 0 15 15"><g fill="none" stroke="#62bd5a"><rect x="1.65" y="5.9" width="8.9" height="8.1" rx="0.8" stroke-width="1.35"></rect><path d="M8.3 5.6V3.7a2.5 2.5 0 0 1 5 0" stroke-width="1.15"></path></g><rect x="5.05" y="8.9" width="2.1" height="2.1" rx="0.6" fill="#62bd5a"></rect></svg><svg class="i" style="left:571.0px;top:640.8000000000001px" width="15" height="15" viewBox="0 0 15 15"><g fill="none" stroke="#62bd5a"><rect x="1.65" y="5.9" width="8.9" height="8.1" rx="0.8" stroke-width="1.35"></rect><path d="M8.3 5.6V3.7a2.5 2.5 0 0 1 5 0" stroke-width="1.15"></path></g><rect x="5.05" y="8.9" width="2.1" height="2.1" rx="0.6" fill="#62bd5a"></rect></svg><svg class="i" style="left:705.2px;top:640.8000000000001px" width="15" height="15" viewBox="0 0 15 15"><g fill="none" stroke="#62bd5a"><rect x="1.65" y="5.9" width="8.9" height="8.1" rx="0.8" stroke-width="1.35"></rect><path d="M8.3 5.6V3.7a2.5 2.5 0 0 1 5 0" stroke-width="1.15"></path></g><rect x="5.05" y="8.9" width="2.1" height="2.1" rx="0.6" fill="#62bd5a"></rect></svg><svg class="i" style="left:858px;top:641.9000000000001px" width="14" height="14" viewBox="0 0 14 14"><circle cx="7" cy="7" r="6.8" fill="#62bd5a"></circle><path fill="none" stroke="#fff" stroke-width="1.3" d="M3.1 7.1l2.7 2.8 5.2-5.3"></path></svg><span class="t" style="top: 643px; font-size: 12.7px; color: rgb(107, 154, 203); line-height: 12.7px; left: 850px; width: 300px; text-align: center; letter-spacing: 0px;">0</span><span class="t" style="top: 643px; font-size: 12.7px; color: rgb(107, 154, 203); line-height: 12.7px; left: 967px; width: 300px; text-align: center; letter-spacing: 0px;">0</span><span class="t" style="top: 643px; font-size: 12.7px; color: rgb(107, 154, 203); line-height: 12.7px; left: 1093px; width: 300px; text-align: center; letter-spacing: 0px;">0</span><span class="t" style="top: 643px; font-size: 12.7px; color: rgb(107, 154, 203); line-height: 12.7px; left: 1236.8px; width: 300px; text-align: center; letter-spacing: 0px;">0</span><svg class="i" style="left:1505.8px;top:641.9000000000001px" width="14" height="14" viewBox="0 0 14 14"><circle cx="7" cy="7" r="6.8" fill="#62bd5a"></circle><path fill="none" stroke="#fff" stroke-width="1.3" d="M3.1 7.1l2.7 2.8 5.2-5.3"></path></svg><div style="left:0px;top:667px;width:1571px;height:38px;background:#eef2f6;"></div><div style="left:8px;top:675px;width:21px;height:22px;background:#fff;border:1px solid #bcc4cd;border-radius:3px;box-sizing:border-box;"></div><span class="t" style="top: 681px; font-size: 12.77px; color: rgb(107, 154, 203); line-height: 12.77px; left: 58.3px; letter-spacing: -0.006px;">950</span><span class="t" style="top: 681px; font-size: 12.44px; color: rgb(107, 154, 203); line-height: 12.44px; left: 167.3px; letter-spacing: -0.001px;">TeilKo 930 + 940</span><svg class="i" style="left:463.4px;top:678.8000000000001px" width="15" height="15" viewBox="0 0 15 15"><g fill="none" stroke="#62bd5a"><rect x="1.65" y="5.9" width="8.9" height="8.1" rx="0.8" stroke-width="1.35"></rect><path d="M8.3 5.6V3.7a2.5 2.5 0 0 1 5 0" stroke-width="1.15"></path></g><rect x="5.05" y="8.9" width="2.1" height="2.1" rx="0.6" fill="#62bd5a"></rect></svg><svg class="i" style="left:570.7px;top:679.4000000000001px" width="12" height="15" viewBox="0 0 12 15"><path fill="#dc3545" d="M1.9 5.6h8.2a1 1 0 0 1 1 1v7.1a1 1 0 0 1-1 1H1.9a1 1 0 0 1-1-1V6.6a1 1 0 0 1 1-1z"></path><path fill="none" stroke="#dc3545" stroke-width="1.35" d="M3.4 6V4.1a2.6 2.6 0 0 1 5.2 0V6"></path><rect x="4.9" y="9" width="2.2" height="2.2" rx="0.5" fill="#fff"></rect></svg><svg class="i" style="left:705.2px;top:678.8000000000001px" width="15" height="15" viewBox="0 0 15 15"><g fill="none" stroke="#62bd5a"><rect x="1.65" y="5.9" width="8.9" height="8.1" rx="0.8" stroke-width="1.35"></rect><path d="M8.3 5.6V3.7a2.5 2.5 0 0 1 5 0" stroke-width="1.15"></path></g><rect x="5.05" y="8.9" width="2.1" height="2.1" rx="0.6" fill="#62bd5a"></rect></svg><svg class="i" style="left:858px;top:679.9000000000001px" width="14" height="14" viewBox="0 0 14 14"><circle cx="7" cy="7" r="6.8" fill="#62bd5a"></circle><path fill="none" stroke="#fff" stroke-width="1.3" d="M3.1 7.1l2.7 2.8 5.2-5.3"></path></svg><span class="t" style="top: 681px; font-size: 12.7px; color: rgb(107, 154, 203); line-height: 12.7px; left: 850px; width: 300px; text-align: center; letter-spacing: 0px;">0</span><span class="t" style="top: 681px; font-size: 12.7px; color: rgb(107, 154, 203); line-height: 12.7px; left: 967px; width: 300px; text-align: center; letter-spacing: 0px;">0</span><span class="t" style="top: 681px; font-size: 12.7px; color: rgb(107, 154, 203); line-height: 12.7px; left: 1093px; width: 300px; text-align: center; letter-spacing: 0px;">0</span><span class="t" style="top: 681px; font-size: 12.7px; color: rgb(107, 154, 203); line-height: 12.7px; left: 1236.8px; width: 300px; text-align: center; letter-spacing: 0px;">0</span><svg class="i" style="left:1505.8px;top:679.9000000000001px" width="14" height="14" viewBox="0 0 14 14"><circle cx="7" cy="7" r="6.8" fill="#62bd5a"></circle><path fill="none" stroke="#fff" stroke-width="1.3" d="M3.1 7.1l2.7 2.8 5.2-5.3"></path></svg><div style="left:35px;top:58px;width:1px;height:38px;background:#c6cdd4;"></div><div style="left:35px;top:97px;width:1px;height:681px;background:#cdd3da;"></div><div style="left:144px;top:58px;width:1px;height:38px;background:#c6cdd4;"></div><div style="left:144px;top:97px;width:1px;height:608px;background:#cdd3da;"></div><div style="left:414px;top:58px;width:1px;height:38px;background:#c6cdd4;"></div><div style="left:414px;top:97px;width:1px;height:608px;background:#cdd3da;"></div><div style="left:522px;top:58px;width:1px;height:38px;background:#c6cdd4;"></div><div style="left:522px;top:97px;width:1px;height:608px;background:#cdd3da;"></div><div style="left:630px;top:58px;width:1px;height:38px;background:#c6cdd4;"></div><div style="left:630px;top:97px;width:1px;height:608px;background:#cdd3da;"></div><div style="left:792px;top:58px;width:1px;height:38px;background:#c6cdd4;"></div><div style="left:792px;top:97px;width:1px;height:608px;background:#cdd3da;"></div><div style="left:936px;top:58px;width:1px;height:38px;background:#c6cdd4;"></div><div style="left:936px;top:97px;width:1px;height:608px;background:#cdd3da;"></div><div style="left:1062px;top:58px;width:1px;height:38px;background:#c6cdd4;"></div><div style="left:1062px;top:97px;width:1px;height:608px;background:#cdd3da;"></div><div style="left:1170px;top:58px;width:1px;height:38px;background:#c6cdd4;"></div><div style="left:1170px;top:97px;width:1px;height:608px;background:#cdd3da;"></div><div style="left:1314px;top:58px;width:1px;height:38px;background:#c6cdd4;"></div><div style="left:1314px;top:97px;width:1px;height:608px;background:#cdd3da;"></div><div style="left:1458px;top:58px;width:1px;height:38px;background:#c6cdd4;"></div><div style="left:1458px;top:97px;width:1px;height:608px;background:#cdd3da;"></div><div style="left:1566px;top:58px;width:1px;height:38px;background:#c6cdd4;"></div><div style="left:1566px;top:97px;width:1px;height:608px;background:#cdd3da;"></div><div style="left:1571px;top:97px;width:17px;height:676px;background:#f1f1f1;"></div><svg class="i" style="left:1575.5px;top:104.30000000000001px" width="8" height="4" viewBox="0 0 8 4"><path fill="#a3a3a3" d="M4 0l4 4H0z"></path></svg><svg class="i" style="left:1575.5px;top:760.7px" width="8" height="4" viewBox="0 0 8 4"><path fill="#a3a3a3" d="M0 0h8L4 4z"></path></svg><div style="left:36px;top:773px;width:1535px;height:16px;background:#f1f1f1;"></div><div style="left:1571px;top:773px;width:17px;height:16px;background:#dcdcdc;"></div><div style="left:53px;top:775px;width:508px;height:12px;background:#c1c1c1;"></div><svg class="i" style="left:41.5px;top:777px" width="4" height="8" viewBox="0 0 4 8"><path fill="#505050" d="M4 0v8L0 4z"></path></svg><svg class="i" style="left:1561px;top:777px" width="4" height="8" viewBox="0 0 4 8"><path fill="#505050" d="M0 0l4 4-4 4z"></path></svg></div></main></body></html>
